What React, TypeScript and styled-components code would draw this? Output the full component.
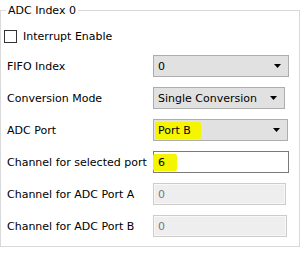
import React from 'react'
import styled, { createGlobalStyle } from 'styled-components'

const GlobalStyle = createGlobalStyle`
  html, body {
    margin: 0;
    padding: 0;
    background: #ffffff;
  }
  body {
    font-family: 'DejaVu Sans', 'Liberation Sans', sans-serif;
    font-size: 11px;
    color: #000000;
  }
`

const Group = styled.fieldset`
  box-sizing: border-box;
  width: 300px;
  height: 243px;
  margin: 4px 0 0 0;
  padding: 8px 10px 9px 3px;
  border: 1px solid #d9d9d9;
  border-radius: 0;
  min-width: 0;
`

const Title = styled.legend`
  padding: 0 2px;
  margin-left: 2px;
  line-height: 13px;
  font-size: 11px;
`

const CheckRow = styled.label`
  display: flex;
  align-items: center;
  gap: 6px;
  height: 22px;
  margin-bottom: 8px;
`

const CheckBox = styled.span`
  box-sizing: border-box;
  width: 13px;
  height: 13px;
  border: 1px solid #333333;
  background: #ffffff;
`

const Fields = styled.div`
  display: grid;
  grid-template-columns: 1fr auto;
  row-gap: 10px;
  align-items: center;
`

const FieldLabel = styled.span`
  padding-left: 3px;
  white-space: nowrap;
`

const Combo = styled.div<{ $w: number }>`
  box-sizing: border-box;
  width: ${p => p.$w}px;
  height: 22px;
  display: flex;
  align-items: center;
  justify-content: space-between;
  padding: 0 7px 0 4px;
  background: #e1e1e1;
  border: 1px solid #adadad;
`

const Input = styled.div<{ $w: number; $disabled?: boolean }>`
  box-sizing: border-box;
  width: ${p => p.$w}px;
  height: 22px;
  display: flex;
  align-items: center;
  padding: 0 4px;
  background: ${p => (p.$disabled ? '#eeeeee' : '#ffffff')};
  border: 1px solid ${p => (p.$disabled ? '#cccccc' : '#7a7a7a')};
  box-shadow: ${p => (p.$disabled ? 'inset 0 0 0 1px #f8f8f8' : 'none')};
  color: ${p => (p.$disabled ? '#7a7a7a' : '#000000')};
`

const Mark = styled.span<{ $pad: string; $shift: number }>`
  background: #f5f500;
  padding: ${p => p.$pad};
  margin-left: ${p => p.$shift}px;
  border-radius: 2px;
  line-height: 13px;
`

const Arrow = () => (
  <svg width="7" height="4" viewBox="0 0 7 4">
    <path d="M0 0H7L3.5 4Z" fill="#000000" />
  </svg>
)

export default function App() {
  return (
    <>
      <GlobalStyle />
      <Group>
        <Title>ADC Index 0</Title>
        <CheckRow>
          <CheckBox />
          <span>Interrupt Enable</span>
        </CheckRow>
        <Fields>
          <FieldLabel>FIFO Index</FieldLabel>
          <Combo $w={136}>
            <span>0</span>
            <Arrow />
          </Combo>
          <FieldLabel>Conversion Mode</FieldLabel>
          <Combo $w={132}>
            <span>Single Conversion</span>
            <Arrow />
          </Combo>
          <FieldLabel>ADC Port</FieldLabel>
          <Combo $w={135}>
            <Mark $pad="2px 10px 2px 3px" $shift={-3}>
              Port B
            </Mark>
            <Arrow />
          </Combo>
          <FieldLabel>Channel for selected port</FieldLabel>
          <Input $w={136}>
            <Mark $pad="2px 12px 2px 5px" $shift={-5}>
              6
            </Mark>
          </Input>
          <FieldLabel>Channel for ADC Port A</FieldLabel>
          <Input $w={133} $disabled>
            0
          </Input>
          <FieldLabel>Channel for ADC Port B</FieldLabel>
          <Input $w={134} $disabled>
            0
          </Input>
        </Fields>
      </Group>
    </>
  )
}
